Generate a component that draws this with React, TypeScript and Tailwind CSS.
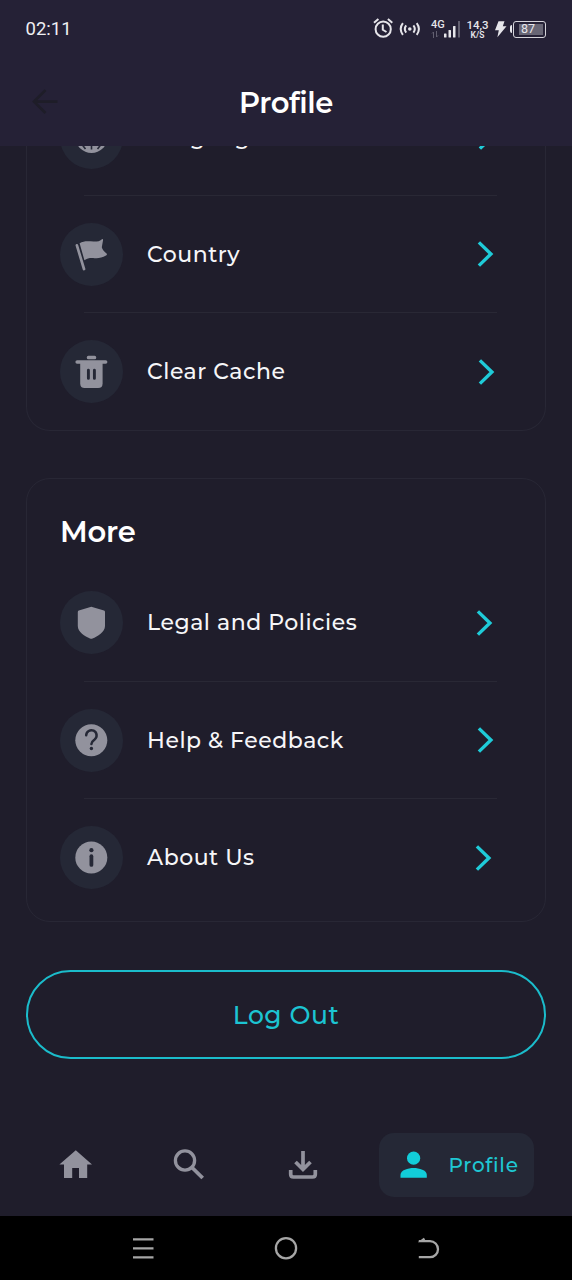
import type { ReactNode } from "react";

type RowProps = {
  icon: ReactNode;
  label: string;
  height: string;
  chevronPad: string;
  divider?: boolean;
};

function Chevron() {
  return (
    <svg className="h-7 w-[18px] shrink-0" viewBox="0 0 18 28" fill="none">
      <path d="M1.9 2.4 13.9 14 1.9 25.6" stroke="#1fcbd8" strokeWidth="3.4" />
    </svg>
  );
}

function Row({ icon, label, height, chevronPad, divider }: RowProps) {
  return (
    <>
      <div className={`flex shrink-0 items-center pl-[33px] ${height} ${chevronPad}`}>
        <div className="h-[63px] w-[63px] shrink-0 rounded-full bg-[#252836]">{icon}</div>
        <span className="ml-6 flex-1 pt-[1.5px] text-[22px] leading-8 font-medium tracking-[0.53px] whitespace-nowrap text-[#f6f6f8]">
          {label}
        </span>
        <Chevron />
      </div>
      {divider && <div className="mr-12 ml-[57px] h-px shrink-0 bg-[#292835]" />}
    </>
  );
}

const box = "h-[63px] w-[63px]";

const Globe = () => (
  <svg className={box} viewBox="0 0 63 63">
    <circle cx="31.5" cy="31" r="16" fill="#92929d" />
    <g fill="none" stroke="#252836" strokeWidth="1.6">
      <path d="M31.5 15v28.5M16 31h31M20 22q11.5 4 23 0M22 38.5l3.5 4.5M41 38.5l-3.5 4.5" />
    </g>
  </svg>
);

const Flag = () => (
  <svg className={box} viewBox="0 0 63 63" fill="#92929d">
    <path d="M16.9 22.4 24 46" stroke="#92929d" strokeWidth="2.7" strokeLinecap="round" />
    <path d="M19.6 20.3C24 17.5 29 18.4 33.5 18.6C37 18.7 40 18.2 42.3 15.9Q43.4 16 43 17.4L41.8 24.3C42.3 27 44.5 28.6 46.8 30.8Q47.3 31.7 46 32.6C42 35 38 35.6 34.5 35.2C31 34.8 27.5 35 24.4 37.2Z" />
  </svg>
);

const Trash = () => (
  <svg className={box} viewBox="0 0 63 63" fill="#92929d">
    <rect x="26.8" y="15.8" width="9.4" height="3.4" rx="1.5" />
    <rect x="15.4" y="20.2" width="32" height="3.6" rx="1.7" />
    <path d="M20.2 22h22.4v21.5q0 4.5-4.5 4.5H24.7q-4.5 0-4.5-4.5Z" />
    <path d="M28.4 30.2v8.2M34.4 30.2v8.2" stroke="#252836" strokeWidth="2.9" strokeLinecap="round" />
  </svg>
);

const Shield = () => (
  <svg className={box} viewBox="0 0 63 63" fill="#92929d">
    <path d="M31.3 15.7 44 19.6Q45 20 45 21V35C45 41 37.5 45.5 32.5 47.5Q31.3 48 30 47.5C25 45.4 17.8 41 17.8 35V21Q17.8 20 18.8 19.6Z" />
  </svg>
);

const Help = () => (
  <svg className={box} viewBox="0 0 63 63" fill="none">
    <circle cx="31.3" cy="31.2" r="16" fill="#92929d" />
    <path d="M26.2 26.3a5.2 5.2 0 1 1 8.5 4.1c-2.1 1.5-3.3 2.2-3.3 4.6" stroke="#252836" strokeWidth="2.5" strokeLinecap="round" />
    <circle cx="31.4" cy="39.5" r="1.7" fill="#252836" />
  </svg>
);

const Info = () => (
  <svg className={box} viewBox="0 0 63 63">
    <circle cx="31.3" cy="31.5" r="16" fill="#92929d" />
    <circle cx="31.4" cy="24.2" r="2.1" fill="#252836" />
    <path d="M31.4 30.2v8.7" stroke="#252836" strokeWidth="3.8" strokeLinecap="round" />
  </svg>
);

function StatusIcons() {
  return (
    <div className="flex h-6 items-center text-[#e6e5ea]">
      <svg className="h-6 w-[54px]" viewBox="0 0 54 24" fill="none" stroke="currentColor">
        <circle cx="11.2" cy="12.2" r="7.6" strokeWidth="2" />
        <path d="M10.8 7.6v5.2l3.7 2.2M2 5.8l4.4-3.7M20.3 5.8l-4.4-3.7" strokeWidth="2" />
        <circle cx="37.8" cy="12" r="1.8" fill="currentColor" stroke="none" />
        <path d="M34.2 8.4q-2.8 3.6 0 7.2M41.4 8.4q2.8 3.6 0 7.2M30.9 6.2q-4.4 5.8 0 11.6M44.7 6.2q4.4 5.8 0 11.6" strokeWidth="2" />
      </svg>
      <div className="ml-[5px] flex h-6 w-[30px] items-end">
        <div className="flex h-6 w-[13px] flex-col items-start">
          <span className="mt-[2px] text-[11px] leading-[12px] font-medium">4G</span>
          <svg className="h-[7px] w-2" viewBox="0 0 8 7" fill="none" stroke="#625f70">
            <path d="M2.5 7V1L1 2.5M5.5 0v6L7 4.5" />
          </svg>
        </div>
        <svg className="h-6 w-[17px]" viewBox="0 0 17 24" fill="currentColor">
          <rect x="0" y="16.5" width="2.5" height="4" rx=".5" />
          <rect x="4.5" y="13" width="2.5" height="7.5" rx=".5" />
          <rect x="9" y="9" width="2.5" height="11.5" rx=".5" />
          <rect x="14" y="4" width="2" height="16.5" fill="#625f70" />
        </svg>
      </div>
      <div className="ml-[5px] flex w-[23px] flex-col items-center">
        <span className="text-[11.5px] leading-[11px] font-medium">14,3</span>
        <span className="text-[8.5px] leading-[8px] font-semibold">K/S</span>
      </div>
      <svg className="ml-[5px] h-6 w-[13px]" viewBox="0 0 13 24" fill="currentColor">
        <path d="M4.5 4.3h6L8.8 9.2h3.7L3.4 20.3l1.4-7.1H1Z" />
      </svg>
      <div className="ml-[3px] h-2 w-[2px] rounded-l bg-[#e6e5ea]" />
      <div className="ml-px flex h-[17px] w-[33px] items-center rounded-[3px] border-[1.5px] border-[#d5d4da] p-[2px]">
        <div className="ml-[3px] flex h-full w-[24px] items-center bg-[#686675] pl-[2px] text-[12.5px] font-normal">
          87
        </div>
      </div>
    </div>
  );
}

export default function App() {
  return (
    <div className="flex h-[1280px] w-[572px] flex-col overflow-hidden bg-[#1f1d2b] font-['Montserrat','Inter','Liberation_Sans',sans-serif]">
      <header className="h-[146px] shrink-0 bg-[#252136]">
        <div className="flex h-[58px] items-center justify-between pr-[26px] pl-[25.5px] font-['Roboto',sans-serif]">
          <span className="pt-[2px] text-[18.5px] text-[#efeff2]">02:11</span>
          <StatusIcons />
        </div>
        <div className="grid h-[88px] grid-cols-3 items-center">
          <svg className="ml-[29px] h-7 w-[30px]" viewBox="0 0 30 28" fill="none" stroke="#1e1d28" strokeWidth="2.6">
            <path d="M28.5 13.6H5M16.5 2.2 5 13.6 16.5 25" />
          </svg>
          <h1 className="pt-px text-center text-[29px] leading-9 font-semibold tracking-[-0.4px] text-white">Profile</h1>
        </div>
      </header>

      <main className="flex h-[970px] shrink-0 flex-col px-[26px]">
        <section className="flex h-[285px] w-[520px] shrink-0 flex-col justify-end overflow-hidden rounded-b-[24px] border-x border-b border-[#282735]">
          <Row icon={<Globe />} label="Language" height="h-[116px]" chevronPad="pr-[49px]" divider />
          <Row icon={<Flag />} label="Country" height="h-[116px]" chevronPad="pr-[50px]" divider />
          <Row icon={<Trash />} label="Clear Cache" height="h-[117px]" chevronPad="pr-[49.5px]" />
        </section>

        <section className="mt-[47px] flex h-[444px] w-[520px] shrink-0 flex-col rounded-[24px] border border-[#282735]">
          <h2 className="h-[85px] shrink-0 pt-[33px] pl-[33px] text-[29px] leading-[40px] font-semibold tracking-[-0.2px] text-white">
            More
          </h2>
          <Row icon={<Shield />} label="Legal and Policies" height="h-[117px]" chevronPad="pr-[51.5px]" divider />
          <Row icon={<Help />} label="Help & Feedback" height="h-[116px]" chevronPad="pr-[50px]" divider />
          <Row icon={<Info />} label="About Us" height="h-[117px]" chevronPad="pr-[52px]" />
        </section>

        <button className="mt-12 h-[89px] w-[520px] shrink-0 rounded-full border-2 border-[#1bbccb] pt-[2px] text-[25px] font-medium tracking-[0.55px] text-[#1cc4d2]">
          Log Out
        </button>
      </main>

      <nav className="flex h-[100px] shrink-0 items-start pt-[17px]">
        <svg className="ml-[59px] h-16 w-[34px]" viewBox="0 0 34 64" fill="#92929d">
          <path d="M16.8 17.2 33 31.6H28.2V45H20V35H13.2V45H5V31.6H.4Z" />
        </svg>
        <svg className="ml-[80px] h-16 w-[34px]" viewBox="0 0 34 64" fill="none" stroke="#92929d">
          <circle cx="12" cy="27.5" r="9.6" strokeWidth="3.3" />
          <path d="M19 34.5 29.7 45" stroke="#92929d" strokeWidth="3.8" />
        </svg>
        <svg className="ml-[81px] h-16 w-[30px]" viewBox="0 0 30 64" fill="none" stroke="#92929d" strokeWidth="3.7">
          <path d="M15 18v18M7.5 29 15 36.3 22.5 29M2.7 37v4.2q0 2.8 2.8 2.8h19q2.8 0 2.8-2.8V37" />
        </svg>
        <div className="ml-[61px] flex h-[64px] w-[155px] items-center rounded-[15px] bg-[#252836]">
          <svg className="ml-[21px] h-[28px] w-[28px]" viewBox="0 0 28 28" fill="#12cdd9">
            <circle cx="13.6" cy="7.2" r="6.6" />
            <path d="M.5 26.8v-3.1C.5 19 8 16.9 13.6 16.9S26.8 19 26.8 23.7v3.1Z" />
          </svg>
          <span className="ml-[20.5px] text-[20px] font-medium tracking-[0.7px] text-[#1fc7d3]">Profile</span>
        </div>
      </nav>

      <footer className="flex h-16 shrink-0 items-center bg-black">
        <svg className="ml-[132px] h-6 w-[22px]" viewBox="0 0 22 24" stroke="#a6a6a6" strokeWidth="2.3">
          <path d="M1 3.3h20.5M1 12.4h20.5M1 21.4h20.5" />
        </svg>
        <svg className="ml-[120px] h-6 w-6" viewBox="0 0 24 24" fill="none" stroke="#a6a6a6" strokeWidth="2.3">
          <circle cx="12" cy="12.2" r="10.1" />
        </svg>
        <svg className="ml-[120px] h-6 w-[22px]" viewBox="0 0 22 24" fill="none" stroke="#a6a6a6" strokeWidth="2.3">
          <path d="M6.5 2.6 3 5.2H12a8 8 0 0 1 0 16H.8M.8 5.2h6" />
        </svg>
      </footer>
    </div>
  );
}
